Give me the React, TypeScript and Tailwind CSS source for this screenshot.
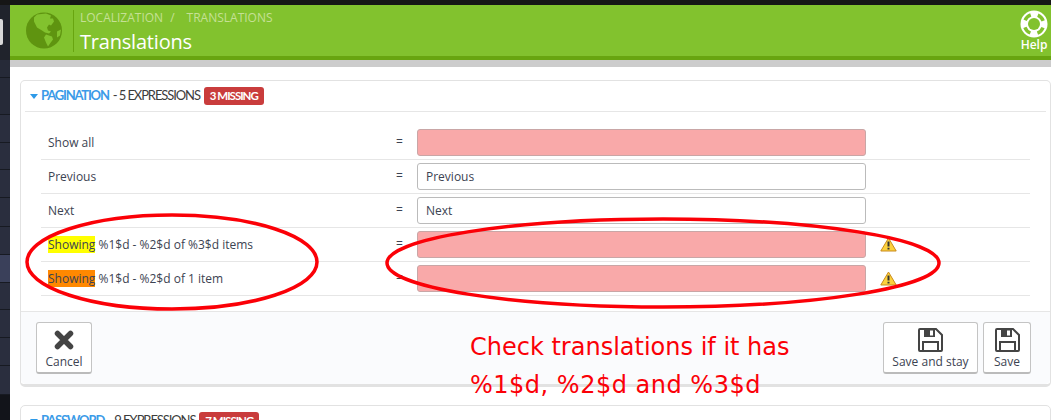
const sideRows = [
  'h-[18px] bg-[#262a38]',
  'h-[37px] bg-[#262a38]',
  'h-[28px] bg-[#2a2e3e]',
  'h-[27px] bg-[#2a2e3e]',
  'h-[28px] bg-[#2a2e3e]',
  'h-[29px] bg-[#2a2e3e]',
  'h-[28px] bg-[#2a2e3e]',
  'h-[28px] bg-[#3a405a]',
  'h-[27px] bg-[#2a2e3e]',
  'h-[28px] bg-[#2a2e3e]',
  'h-[28px] bg-[#2a2e3e]',
  'h-[29px] bg-[#2a2e3e]',
]

function Globe() {
  return (
    <svg width="36" height="37" viewBox="0 0 36 36" className="shrink-0">
      <circle cx="18" cy="18" r="18" fill="#5f9410" />
      <path d="M11 2 L20 1 L25 3 L24 6 L27 6 L28 9 L25 13 L23 12 L21 15 L22 18 L25 19 L23 21 L19 20 L16 18 L11 15 L8 9 L8 5 Z" fill="#82c22e" />
      <path d="M20 22 L26 24 L27 27 L24 31 L22 34 L20 30 L18 25 Z" fill="#82c22e" />
      <path d="M31 19 L35 17 L34 23 L31 25 Z" fill="#82c22e" />
    </svg>
  )
}

function LifeRing() {
  return (
    <svg width="28" height="28" viewBox="0 0 28 28">
      <circle cx="14" cy="14" r="13.5" fill="#fff" />
      <circle cx="14" cy="14" r="9.7" fill="none" stroke="#82c22e" strokeWidth="3.4" strokeDasharray="8 7.24" strokeDashoffset="-3.62" />
      <circle cx="14" cy="14" r="6" fill="#82c22e" />
    </svg>
  )
}

function Warning() {
  return (
    <svg width="17" height="15" viewBox="0 0 17 15">
      <path d="M8.5 1 L16.2 14 H0.8 Z" fill="#fcd23c" stroke="#c98a1c" strokeWidth="1" strokeLinejoin="round" />
      <path d="M8.5 4.5 V9.5 M8.5 10.8 V12.4" stroke="#333" strokeWidth="2" />
    </svg>
  )
}

function Cross() {
  return (
    <svg width="20" height="20" viewBox="0 0 20 20">
      <path d="M3.5 3.5 L16.5 16.5 M16.5 3.5 L3.5 16.5" stroke="#444" strokeWidth="5.5" strokeLinecap="round" />
    </svg>
  )
}

function Floppy() {
  return (
    <svg width="25" height="24" viewBox="0 0 25 24">
      <path d="M2 1 H18 L24 7 V22 A1 1 0 0 1 23 23 H2 A1 1 0 0 1 1 22 V2 A1 1 0 0 1 2 1 Z" fill="none" stroke="#444" strokeWidth="2" />
      <path d="M6 1 H17 V9 H6 Z" fill="#444" />
      <path d="M12 2.5 H15 V7.5 H12 Z" fill="#fff" />
      <path d="M5 23 V14 H20 V23" fill="none" stroke="#444" strokeWidth="2" />
    </svg>
  )
}

function Row({ label, value, missing, warn, mark }: { label: string; value?: string; missing?: boolean; warn?: boolean; mark?: string }) {
  return (
    <div className="flex h-[34px] items-center border-b border-[#e6e6e6] pb-px">
      <div className="w-[355px] pl-[7px] text-[12px] leading-[17px] text-[#3c4352]">
        {mark && <span className={mark}>Showing</span>}
        {label}
      </div>
      <div className="w-[21px] text-[12px] text-[#3c4352]">=</div>
      <div
        className={
          missing
            ? 'h-[27px] w-[449px] rounded-[3px] border border-[#c9a6a6] bg-[#f9a9a9]'
            : 'h-[27px] w-[449px] rounded-[3px] border border-[#bbbbbb] bg-white pl-2 text-[12px] leading-[25px] text-[#3c4352]'
        }
      >
        {value}
      </div>
      {warn && (
        <div className="ml-[14px]">
          <Warning />
        </div>
      )}
    </div>
  )
}

function ToolbarButton({ label, width, children }: { label: string; width: string; children: React.ReactNode }) {
  return (
    <button className={`flex h-[52px] flex-col items-center rounded-[3px] border border-[#c4c4c4] border-b-2 border-b-[#bbbbbb] bg-white pt-[5px] text-[12px] leading-[17px] text-[#3c4352] ${width}`}>
      <span className="flex h-[24px] items-center">{children}</span>
      <span className="mt-[1px]">{label}</span>
    </button>
  )
}

function PanelHeading({ name, count, missing }: { name: string; count: number; missing: number }) {
  return (
    <>
      <span className="mr-[3px] h-0 w-0 border-x-[4px] border-t-[5px] border-x-transparent border-t-[#2e9ae8]" />
      <span className="font-bold tracking-[-1.2px] text-[#3b9be8]">{name}</span>
      <span className="ml-[4px] tracking-[-1.1px] text-[#3c3c3c]">- {count} EXPRESSIONS</span>
      <span className="ml-[4px] rounded-[3px] bg-[#c93c3c] px-[6px] text-[11.5px] font-bold leading-[18px] tracking-[-1px] text-white">{missing} MISSING</span>
    </>
  )
}

export default function App() {
  return (
    <div className="relative h-[420px] w-[1051px] overflow-hidden bg-white font-['Open_Sans',sans-serif]">
      <div className="h-[5px] bg-[#161616]" />
      <div className="flex h-[415px]">
        {/* Sidebar strip */}
        <div className="flex w-[10px] shrink-0 flex-col bg-[#12141a]">
          <div className="h-[55px] bg-[#20232c] pt-[14px]">
            <div className="h-[26px] w-[3px] rounded-r-[2px] bg-[#d8d8d8]" />
          </div>
          {sideRows.map((row, i) => (
            <div key={i} className={`${row} border-b border-[#171a22]`} />
          ))}
        </div>

        <div className="min-w-0 flex-1">
          {/* Page header */}
          <div className="flex h-[55px] items-center border-b-[4px] border-[#68a510] bg-[#82c22e] pl-[16px]">
            <Globe />
            <div className="ml-[11px] h-[42px] w-px bg-[#68a510]" />
            <div className="ml-[6px] flex-1 pt-[4px]">
              <div className="flex text-[12px] leading-[14px] text-[#c5e095]">
                <span>LOCALIZATION</span>
                <span className="ml-[7px]">/</span>
                <span className="ml-[12px]">TRANSLATIONS</span>
              </div>
              <div className="mt-[4px] text-[20px] leading-[26px] tracking-[-0.2px] text-white">Translations</div>
            </div>
            <div className="mr-[3px] flex flex-col items-center text-[12px] font-semibold leading-[13px] text-white">
              <LifeRing />
              <span>Help</span>
            </div>
          </div>
          <div className="h-[7px] bg-[#cccccc]" />

          <div className="pl-[10px] pt-[13px]">
            {/* Pagination panel */}
            <div className="rounded-[5px] border border-[#e2e2e2] border-b-[3px]">
              <div className="mx-[4px] flex h-[31px] items-center border-b border-[#e6e6e6] pl-[5px] font-['Lato',sans-serif] text-[13px]">
                <PanelHeading name="PAGINATION" count={5} missing={3} />
              </div>

              <div className="mx-[20px] mt-[14px]">
                <Row label="Show all" missing />
                <Row label="Previous" value="Previous" />
                <Row label="Next" value="Next" />
                <Row label=" %1$d - %2$d of %3$d items" missing warn mark="bg-[#ffff00]" />
                <Row label=" %1$d - %2$d of 1 item" missing warn mark="bg-[#ff8800]" />
              </div>

              <div className="mt-[15px] flex h-[73px] items-start justify-between rounded-b-[5px] border-t border-[#e6e6e6] bg-[#fafbfd] pl-[15px] pr-[19px] pt-[10px]">
                <ToolbarButton label="Cancel" width="w-[56px]">
                  <Cross />
                </ToolbarButton>
                <div className="flex gap-[5px]">
                  <ToolbarButton label="Save and stay" width="w-[95px]">
                    <Floppy />
                  </ToolbarButton>
                  <ToolbarButton label="Save" width="w-[48px]">
                    <Floppy />
                  </ToolbarButton>
                </div>
              </div>
            </div>

            {/* Next panel, cut by the window */}
            <div className="mt-[18px] rounded-t-[5px] border border-[#e2e2e2]">
              <div className="mx-[4px] flex h-[30px] items-center pl-[5px] font-['Lato',sans-serif] text-[13px]">
                <PanelHeading name="PASSWORD" count={9} missing={7} />
              </div>
            </div>
          </div>
        </div>
      </div>

      {/* Hand-drawn annotations on top of the screenshot */}
      <svg className="pointer-events-none absolute inset-0" width="1051" height="420" viewBox="0 0 1051 420">
        <ellipse cx="172" cy="262" rx="145" ry="47" fill="none" stroke="#fb0007" strokeWidth="3.5" />
        <ellipse cx="663" cy="263" rx="276" ry="44" fill="none" stroke="#fb0007" strokeWidth="3.5" />
      </svg>
      <div className="absolute left-[470px] top-[328px] font-['DejaVu_Sans',sans-serif] text-[24px] leading-[38px] text-[#fb0007]">
        Check translations if it has
        <br />
        <span className="tracking-[0.5px]">%1$d, %2$d and %3$d</span>
      </div>
    </div>
  )
}
